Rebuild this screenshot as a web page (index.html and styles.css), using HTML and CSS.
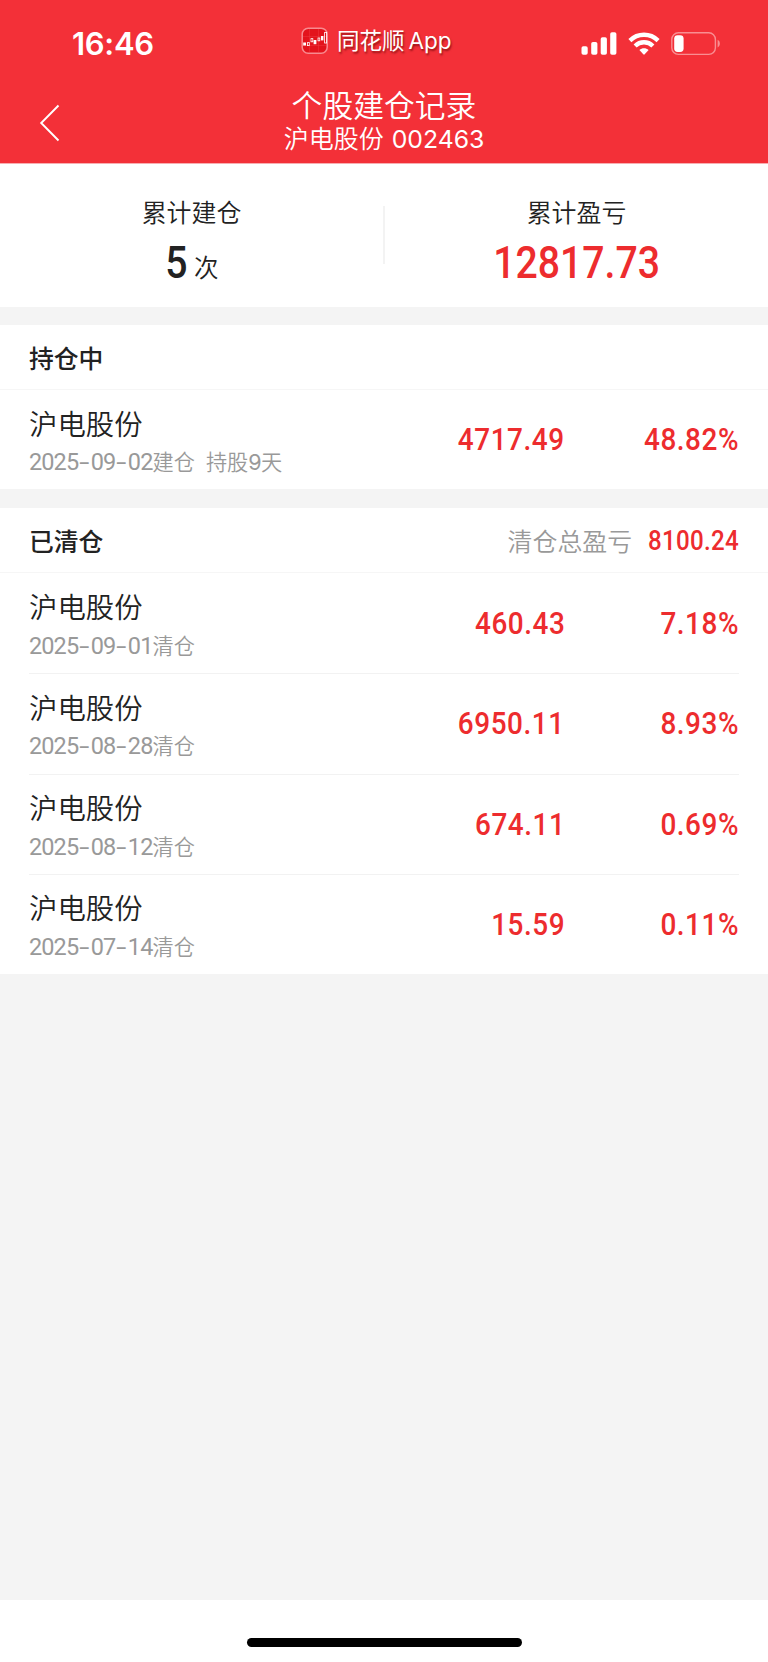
FILE: index.html
```html
<!DOCTYPE html>
<html lang="zh-CN">
<head>
<meta charset="utf-8">
<title>个股建仓记录</title>
<link rel="stylesheet" href="styles.css">
</head>
<body>
<div class="screen">
  <header class="top">
    <div class="status">
      <div class="time">16:46</div>
      <div class="brand">
        <svg class="brand-icon" width="28" height="28" viewBox="0 0 28 28">
          <rect x="1.2" y="1.2" width="25" height="25" rx="6" fill="#e3131c" stroke="#f88a8f" stroke-width="1.5"/>
          <path d="M2 9.5H25M2 18.5H25M8.5 2V25M17.5 2V25" stroke="#ec3941" stroke-width=".5"/>
          <g fill="#fff"><rect x="2.2" y="15.5" width="2.8" height="3"/><rect x="12.6" y="13" width="2.8" height="4.2"/><rect x="20" y="9" width="2.4" height="4.4"/></g>
          <g fill="none" stroke="#fff" stroke-width=".8"><rect x="6.5" y="15.6" width="1.8" height="3"/><rect x="10" y="11.6" width="1.8" height="3.2"/><rect x="17" y="11" width="1.8" height="2.8"/><rect x="23.6" y="5.5" width="2" height="10.5"/></g>
        </svg>
        <span class="brand-name">同花顺</span><span class="brand-app">App</span>
      </div>
      <div class="indicators">
        <svg width="36" height="24" viewBox="0 0 36 24" fill="#fff">
          <rect x=".5" y="14.2" width="6.2" height="8.6" rx="1.8"/><rect x="10.2" y="10" width="6.2" height="12.8" rx="1.8"/><rect x="19.7" y="5.2" width="6.2" height="17.6" rx="1.8"/><rect x="29.2" y=".2" width="6.2" height="22.6" rx="1.8"/>
        </svg>
        <svg width="32" height="24" viewBox="0 0 32 24">
          <g fill="none" stroke="#fff" stroke-width="4.3"><path d="M1.9 8.6C9.8 .8 22.2 .8 30.1 8.6"/><path d="M7.1 13.9C12 9 20 9 24.9 13.9"/></g>
          <path fill="#fff" d="M11.4 18C14 15.6 18 15.6 20.6 18L16.7 22.3Q16 23 15.3 22.3Z"/>
        </svg>
        <svg width="50" height="24" viewBox="0 0 50 24">
          <rect x=".8" y=".8" width="43.6" height="21.6" rx="6.6" fill="none" stroke="#f98e92" stroke-width="1.4"/>
          <path d="M46.6 7.8C49.6 9.2 49.6 14 46.6 15.4Z" fill="#f98e92"/>
          <rect x="3.2" y="3.2" width="9.4" height="16.8" rx="3.4" fill="#fff"/>
        </svg>
      </div>
    </div>
    <nav class="nav">
      <svg class="back" width="22" height="38" viewBox="0 0 22 38"><path d="M19.5 1.5L2.2 19L19.5 36.5" fill="none" stroke="#fff" stroke-width="1.9"/></svg>
      <div class="titles">
        <div class="title">个股建仓记录</div>
        <div class="subtitle">沪电股份<span class="code">002463</span></div>
      </div>
    </nav>
  </header>

  <section class="summary">
    <div class="stat">
      <div class="stat-label">累计建仓</div>
      <div class="stat-value"><span class="big">5</span><span class="unit">次</span></div>
    </div>
    <div class="divider"></div>
    <div class="stat">
      <div class="stat-label">累计盈亏</div>
      <div class="stat-value red"><span class="big">12817.73</span></div>
    </div>
  </section>

  <section class="card">
    <div class="card-head"><h2>持仓中</h2></div>
    <div class="row">
      <div class="info"><div class="name">沪电股份</div><div class="date"><span class="num">2025<i>-</i>09<i>-</i>02</span>建仓<span class="held">持股<b>9</b>天</span></div></div>
      <div class="value">4717.49</div><div class="pct">48.82%</div>
    </div>
  </section>

  <section class="card closed">
    <div class="card-head"><h2>已清仓</h2><span class="total-label">清仓总盈亏</span><span class="total">8100.24</span></div>
    <div class="row">
      <div class="info"><div class="name">沪电股份</div><div class="date"><span class="num">2025<i>-</i>09<i>-</i>01</span>清仓</div></div>
      <div class="value">460.43</div><div class="pct">7.18%</div>
    </div>
    <div class="row">
      <div class="info"><div class="name">沪电股份</div><div class="date"><span class="num">2025<i>-</i>08<i>-</i>28</span>清仓</div></div>
      <div class="value">6950.11</div><div class="pct">8.93%</div>
    </div>
    <div class="row">
      <div class="info"><div class="name">沪电股份</div><div class="date"><span class="num">2025<i>-</i>08<i>-</i>12</span>清仓</div></div>
      <div class="value">674.11</div><div class="pct">0.69%</div>
    </div>
    <div class="row">
      <div class="info"><div class="name">沪电股份</div><div class="date"><span class="num">2025<i>-</i>07<i>-</i>14</span>清仓</div></div>
      <div class="value">15.59</div><div class="pct">0.11%</div>
    </div>
  </section>

  <footer class="home"><div class="home-bar"></div></footer>
</div>
</body>
</html>
```

FILE: styles.css
```css
* { box-sizing: border-box; }
body { margin: 0; background: #f4f4f4; color: #222; font-family: "Noto Sans CJK SC", sans-serif; }
.screen { width: 768px; height: 1662px; display: flex; flex-direction: column; background: #f4f4f4; }
svg { display: block; flex: none; }

.top { height: 164px; background: #f33038; color: #fff; border-bottom: 1px solid #f8aeb1; }
.status { height: 86px; display: grid; grid-template-columns: 301px 280px 1fr; }
.time { padding: 25px 0 0 72px; font: 600 31px/38px Inter, sans-serif; letter-spacing: -.3px; }
.brand { display: flex; align-items: center; height: 40px; margin-top: 21px; text-shadow: 1px 2px 2px rgba(90, 0, 0, .6); }
.brand-icon { margin-right: 8px; }
.brand-name { font-size: 22.5px; line-height: 40px; margin-top: -4px; }
.brand-app { font: 400 22.5px/40px Inter, sans-serif; margin: -1px 0 0 4px; }
.indicators { display: flex; padding-top: 32px; }
.indicators svg + svg { margin-left: 11px; }

.nav { display: flex; height: 77px; padding-left: 39px; }
.back { margin-top: 18px; }
.titles { width: 646px; text-align: center; }
.title { font-size: 30.8px; line-height: 36px; font-weight: 350; }
.subtitle { font-size: 25px; line-height: 30px; font-weight: 350; }
.code { font-family: Inter, sans-serif; font-weight: 400; font-size: 24.8px; margin-left: 8px; }

.summary { display: flex; height: 143px; background: #fff; }
.divider { width: 2px; height: 58px; margin-top: 42px; background: #f3f3f3; }
.stat { flex: 1; text-align: center; }
.stat-label { margin-top: 29px; font-size: 24.9px; line-height: 36px; font-weight: 350; }
.stat-value { display: flex; justify-content: center; align-items: baseline; height: 60px; }
.big { font: 500 43.5px/60px Roboto, sans-serif; transform: translateY(1px) scaleX(.9); margin-top: 4px; }
.unit { font-size: 24.5px; margin-left: 5px; font-weight: 350; }
.red { color: #ed2c2e; }

.card { margin-top: 18px; background: #fff; }
.closed { margin-top: 19px; }
.card-head { display: flex; align-items: center; height: 65px; padding: 0 29px; border-bottom: 1px solid #f6f6f6; }
h2 { margin: 0; flex: 1; font-size: 24.8px; line-height: 36px; font-weight: 500; }
.total-label { color: #999; font-size: 24.9px; line-height: 36px; font-weight: 350; }
.total { margin: 2px 0 0 6px; color: #ed2c2e; font: 500 26.8px/36px Roboto, sans-serif; letter-spacing: .3px; transform: scaleX(.9); transform-origin: right; }
.row { display: flex; align-items: center; height: 99px; margin: 0 29px; }
.closed .row { height: 100.25px; }
.row + .row { border-top: 1px solid #f2f2f2; }
.info { flex: 1; padding-top: 3.5px; }
.name { font-size: 28.4px; line-height: 40px; font-weight: 350; }
.date { margin-top: .5px; font-size: 21.2px; line-height: 36px; color: #999; font-weight: 350; }
.num { font: 400 23.5px/36px Roboto, sans-serif; letter-spacing: -.9px; }
.num i { display: inline-block; width: 12.5px; text-align: center; font: 400 21px Inter, sans-serif; letter-spacing: 0; transform: scaleX(1.3); }
.held { margin-left: 11px; }
.held b { font: 400 21.5px Inter, sans-serif; letter-spacing: -.5px; }
.value, .pct { padding-top: 1px; color: #ed2c2e; font: 500 31px/40px Roboto, sans-serif; letter-spacing: .6px; text-align: right; transform: scaleX(.9); transform-origin: right; }
.pct { width: 174px; }

.home { margin-top: auto; height: 62px; background: #fff; padding: 38px 0 0 247px; }
.home-bar { width: 275px; height: 9px; border-radius: 5px; background: #000; }
```
